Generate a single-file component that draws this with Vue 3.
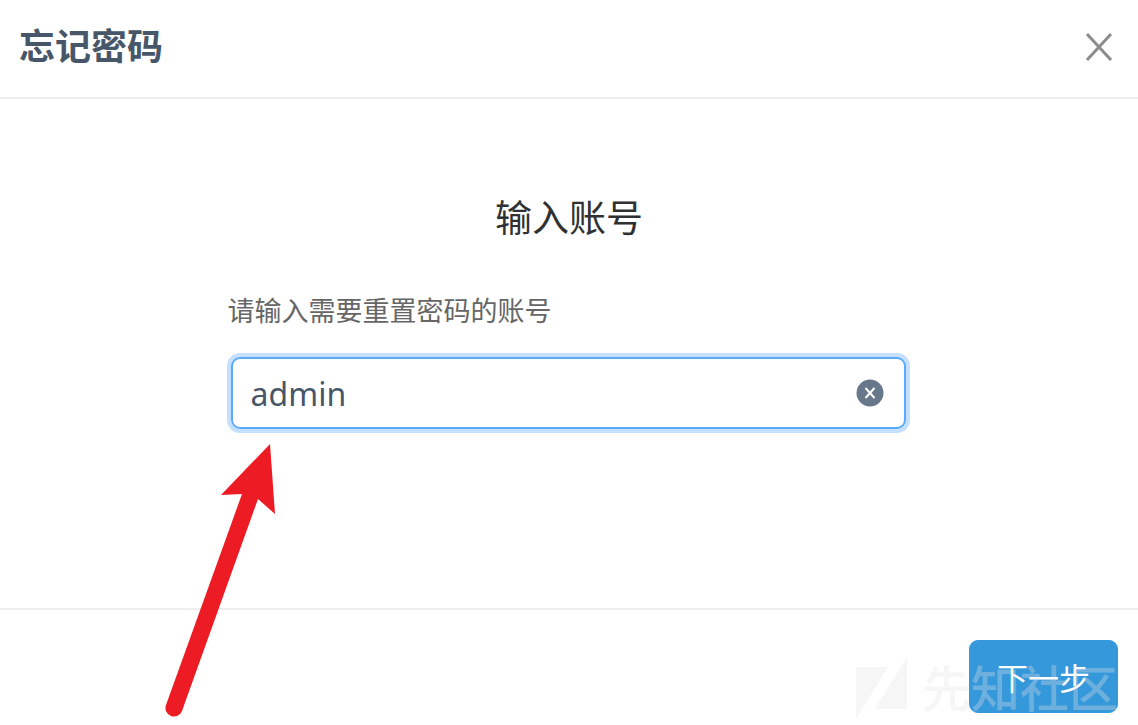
<script setup>
import { ref } from 'vue'

const account = ref('admin')
</script>

<template>
  <section class="dialog" role="dialog" aria-labelledby="dialog-title">
    <header class="head">
      <h1 id="dialog-title" class="title">忘记密码</h1>
      <button class="close" type="button" aria-label="关闭">
        <svg width="28" height="28" viewBox="0 0 28 28" aria-hidden="true">
          <path d="M2 1L26 27M26 1L2 27" />
        </svg>
      </button>
    </header>

    <form id="account-form" class="body" @submit.prevent>
      <h2 class="step">输入账号</h2>
      <label class="label" for="account">请输入需要重置密码的账号</label>
      <div class="field">
        <input id="account" v-model="account" class="input" type="text" autocomplete="off" spellcheck="false" />
        <button class="clear" type="button" aria-label="清空" @click="account = ''">
          <svg width="28" height="28" viewBox="0 0 28 28" aria-hidden="true">
            <circle cx="14" cy="14" r="13.5" />
            <path d="M9.5 9L18.5 19M18.5 9L9.5 19" />
          </svg>
        </button>
      </div>
    </form>

    <footer class="foot">
      <button class="next" type="submit" form="account-form">下一步</button>
    </footer>

    <svg class="arrow" width="110" height="276" viewBox="0 0 110 276" aria-hidden="true">
      <path d="M105 1L110 71L93 56L17 268A8 8 0 0 1 1 262L77 51L56 52Z" />
    </svg>

    <div class="watermark">
      <svg width="52" height="62" viewBox="0 0 52 62" aria-hidden="true">
        <path d="M0 10H32L0 62ZM51 0V52H19Z" />
      </svg>
      <span>先知社区</span>
    </div>
  </section>
</template>

<style>
body {
  margin: 0;
  background: #fff;
}
</style>

<style scoped>
.dialog {
  position: relative;
  box-sizing: border-box;
  display: flex;
  flex-direction: column;
  min-height: 100vh;
  overflow: hidden;
  background: #fff;
  font-family: "Noto Sans", "Noto Sans CJK SC", sans-serif;
}

.head {
  display: flex;
  align-items: center;
  justify-content: space-between;
  padding: 20px 25px 24px 19px;
  border-bottom: 2px solid #eee;
}

.title {
  margin: 0;
  font-size: 36px;
  line-height: 53px;
  font-weight: 700;
  color: #475669;
}

.close,
.clear {
  display: block;
  padding: 0;
  border: 0;
  background: none;
  cursor: pointer;
}

.close svg,
.clear svg {
  display: block;
}

.close path {
  fill: none;
  stroke: #8c8c8c;
  stroke-width: 3;
}

.body {
  flex: 1;
  display: flex;
  flex-direction: column;
  width: 60%;
  margin: 0 auto;
  padding-top: 92px;
}

.step {
  margin: 0;
  font-size: 37px;
  line-height: 54px;
  font-weight: 400;
  text-align: center;
  color: #303133;
}

.label {
  margin-top: 46px;
  font-size: 27px;
  line-height: 40px;
  color: #666;
}

.field {
  display: flex;
  align-items: center;
  margin-top: 26px;
  margin-right: 4px;
  margin-left: 3px;
  padding-right: 20px;
  border: 2px solid #5aa9fb;
  border-radius: 9px;
  box-shadow: 0 0 0 4px #c5e0ff;
}

.input {
  flex: 1;
  min-width: 0;
  height: 68px;
  box-sizing: border-box;
  padding: 0 18px;
  border: 0;
  outline: 0;
  background: none;
  font-family: inherit;
  font-size: 32px;
  color: #475669;
}

.clear circle {
  fill: #66788a;
}

.clear path {
  fill: none;
  stroke: #fff;
  stroke-width: 2;
}

.foot {
  display: flex;
  justify-content: flex-end;
  padding: 30px 20px 12px;
  border-top: 2px solid #eee;
}

.next {
  width: 149px;
  height: 73px;
  padding: 0;
  border: 1px solid #3498db;
  border-radius: 9px;
  background: #3498db;
  font-family: inherit;
  font-size: 31px;
  color: #fff;
  cursor: pointer;
}

.arrow {
  position: absolute;
  top: 443px;
  left: 165px;
  overflow: visible;
  pointer-events: none;
}

.arrow path {
  fill: #ed1c24;
}

.watermark {
  position: absolute;
  right: 20px;
  bottom: 0;
  display: flex;
  align-items: center;
  gap: 14px;
  font-size: 49px;
  font-weight: 500;
  line-height: 74px;
  color: #e4e4e4;
  opacity: 0.32;
  pointer-events: none;
}

.watermark path {
  fill: #e4e4e4;
}
</style>
